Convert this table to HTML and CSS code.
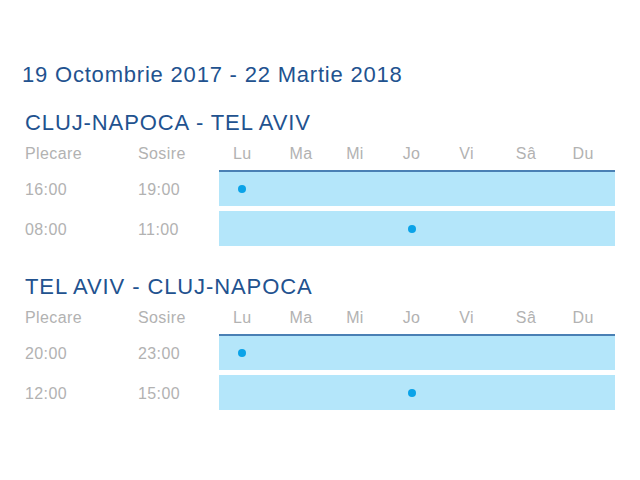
FILE: index.html
```html
<!DOCTYPE html>
<html lang="ro">
<head>
<meta charset="utf-8">
<title>Orar zboruri</title>
<link rel="stylesheet" href="styles.css">
</head>
<body>
<div class="page">
  <h1 class="period">19 Octombrie 2017 - 22 Martie 2018</h1>

  <section class="route">
    <h2 class="route-title">CLUJ-NAPOCA - TEL AVIV</h2>
    <div class="row head">
      <div class="cell">Plecare</div>
      <div class="cell">Sosire</div>
      <div class="days">
        <div class="day">Lu</div><div class="day">Ma</div><div class="day">Mi</div><div class="day">Jo</div><div class="day">Vi</div><div class="day">Sâ</div><div class="day">Du</div>
      </div>
    </div>
    <div class="row flight first">
      <div class="cell time">16:00</div>
      <div class="cell time">19:00</div>
      <div class="days band">
        <div class="slot"><span class="dot"></span></div><div class="slot"></div><div class="slot"></div><div class="slot"></div><div class="slot"></div><div class="slot"></div><div class="slot"></div>
      </div>
    </div>
    <div class="row flight">
      <div class="cell time">08:00</div>
      <div class="cell time">11:00</div>
      <div class="days band">
        <div class="slot"></div><div class="slot"></div><div class="slot"></div><div class="slot"><span class="dot"></span></div><div class="slot"></div><div class="slot"></div><div class="slot"></div>
      </div>
    </div>
  </section>

  <section class="route">
    <h2 class="route-title">TEL AVIV - CLUJ-NAPOCA</h2>
    <div class="row head">
      <div class="cell">Plecare</div>
      <div class="cell">Sosire</div>
      <div class="days">
        <div class="day">Lu</div><div class="day">Ma</div><div class="day">Mi</div><div class="day">Jo</div><div class="day">Vi</div><div class="day">Sâ</div><div class="day">Du</div>
      </div>
    </div>
    <div class="row flight first">
      <div class="cell time">20:00</div>
      <div class="cell time">23:00</div>
      <div class="days band">
        <div class="slot"><span class="dot"></span></div><div class="slot"></div><div class="slot"></div><div class="slot"></div><div class="slot"></div><div class="slot"></div><div class="slot"></div>
      </div>
    </div>
    <div class="row flight">
      <div class="cell time">12:00</div>
      <div class="cell time">15:00</div>
      <div class="days band">
        <div class="slot"></div><div class="slot"></div><div class="slot"></div><div class="slot"><span class="dot"></span></div><div class="slot"></div><div class="slot"></div><div class="slot"></div>
      </div>
    </div>
  </section>
</div>
</body>
</html>
```

FILE: styles.css
```css
html, body {
  margin: 0;
  padding: 0;
  background: #ffffff;
}

.page {
  font-family: "Liberation Sans", Arial, sans-serif;
  padding: 62px 0 0 0;
  width: 640px;
  box-sizing: border-box;
}

.period {
  margin: 0 0 0 22px;
  font-size: 22px;
  line-height: 26px;
  font-weight: normal;
  letter-spacing: 0.8px;
  color: #22528f;
}

.route {
  margin: 22px 0 0 25px;
  width: 590px;
}

.route + .route {
  margin-top: 28px;
}

.route-title {
  margin: 0 0 8px 0;
  font-size: 22px;
  line-height: 26px;
  font-weight: normal;
  letter-spacing: 0.9px;
  color: #22528f;
}

.row {
  display: grid;
  grid-template-columns: 113px 81px 396px;
  align-items: center;
}

.cell {
  font-size: 16px;
  line-height: 20px;
  color: #b2b2b2;
  letter-spacing: 0.4px;
}

.head {
  height: 26px;
  align-items: start;
}

.days {
  display: grid;
  grid-template-columns: repeat(7, 1fr);
}

.day {
  font-size: 16px;
  line-height: 20px;
  color: #b2b2b2;
  padding-left: 14px;
  letter-spacing: 0.4px;
}

.flight {
  height: 35px;
}

.flight + .flight {
  margin-top: 5px;
}

.flight.first {
  height: 36px;
}

.time {
  padding-top: 3px;
}

.band {
  background: #b4e6fa;
  height: 100%;
  box-sizing: border-box;
}

.first .band {
  border-top: 2px solid #4a80b4;
}

.slot {
  display: flex;
  align-items: center;
  padding-left: 19px;
}

.dot {
  width: 8px;
  height: 8px;
  border-radius: 50%;
  background: #0ba3e8;
}
```
